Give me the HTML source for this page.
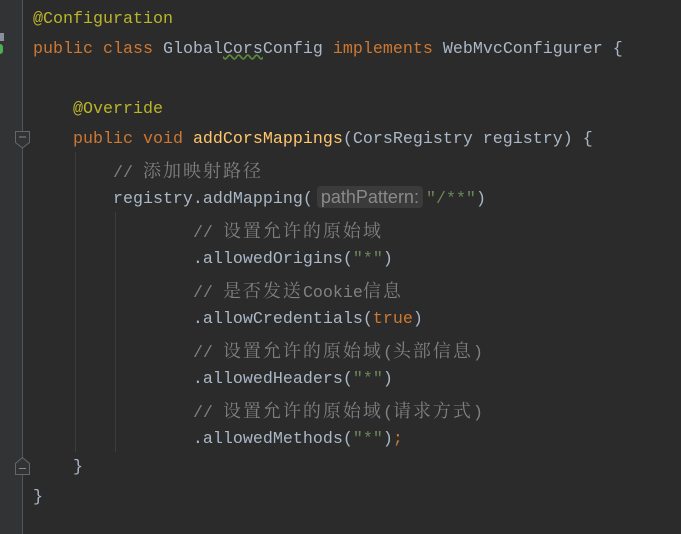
<!DOCTYPE html>
<html><head><meta charset="utf-8"><style>
html,body{margin:0;padding:0}
body{width:681px;height:534px;background:#2b2b2b;position:relative;overflow:hidden;font-family:"Liberation Mono","Noto Serif CJK SC",monospace;font-size:16.67px;color:#a9b7c6}
.g{position:absolute;left:0;top:0;width:22px;height:534px;background:#313335}
.sep{position:absolute;left:22px;top:0;width:1px;height:534px;background:#555}
.l{position:absolute;left:33px;height:30px;line-height:30px;white-space:pre}
.a{color:#bbb529}.k{color:#cc7832}.c{color:#808080}.s{color:#6a8759}.m{color:#ffc66d}
.cn{font-family:"Noto Serif CJK SC",serif;font-size:18px;letter-spacing:2px}
.ig{position:absolute;width:1px;background:#3b3b3b}
.hint{display:inline-block;line-height:22px;background:#3b3b3b;color:#8a8a8a;font-family:"Liberation Sans",sans-serif;font-size:18px;border-radius:4px;padding:0 4px;margin:0 3px 0 4px}
</style></head><body>
<div class="g"></div><div class="sep"></div>
<div style="position:absolute;left:0;top:33px;width:4px;height:8px;background:#8a9099"></div>
<div style="position:absolute;left:0;top:44px;width:3px;height:10px;background:#4caf50;border-radius:0 4px 4px 0"></div>
<svg style="position:absolute;left:14px;top:130px" width="18" height="20"><path d="M1.5 1.5H15.5V12.5L8.5 18L1.5 12.5Z" fill="#313335" stroke="#666" /><path d="M5 7H12" stroke="#888"/></svg>
<svg style="position:absolute;left:14px;top:456px" width="18" height="20"><path d="M1.5 18.5H15.5V7.5L8.5 1.5L1.5 7.5Z" fill="#313335" stroke="#666"/><path d="M5 12.5H12" stroke="#888"/></svg>
<div class="ig" style="left:75px;top:152px;height:300px"></div>
<div class="ig" style="left:115px;top:212px;height:240px"></div>
<div class="l" style="top:5px"><span class="a">@Configuration</span></div>
<div class="l" style="top:35px"><span class="k">public class </span>Global<span style="text-decoration:underline wavy #5a8a3a">Cors</span>Config <span class="k">implements </span>WebMvcConfigurer {</div>
<div class="l" style="top:95px">    <span class="a">@Override</span></div>
<div class="l" style="top:125px">    <span class="k">public void </span><span class="m">addCorsMappings</span>(CorsRegistry registry) {</div>
<div class="l" style="top:155px">        <span class="c">// <span class="cn">添加映射路径</span></span></div>
<div class="l" style="top:185px">        registry.addMapping(<span class="hint">pathPattern:</span><span class="s">"/**"</span>)</div>
<div class="l" style="top:215px">                <span class="c">// <span class="cn">设置允许的原始域</span></span></div>
<div class="l" style="top:245px">                .allowedOrigins(<span class="s">"*"</span>)</div>
<div class="l" style="top:275px">                <span class="c">// <span class="cn">是否发送</span>Cookie<span class="cn">信息</span></span></div>
<div class="l" style="top:305px">                .allowCredentials(<span class="k">true</span>)</div>
<div class="l" style="top:335px">                <span class="c">// <span class="cn">设置允许的原始域</span>(<span class="cn">头部信息</span>)</span></div>
<div class="l" style="top:365px">                .allowedHeaders(<span class="s">"*"</span>)</div>
<div class="l" style="top:395px">                <span class="c">// <span class="cn">设置允许的原始域</span>(<span class="cn">请求方式</span>)</span></div>
<div class="l" style="top:425px">                .allowedMethods(<span class="s">"*"</span>)<span class="k">;</span></div>
<div class="l" style="top:453px">    }</div>
<div class="l" style="top:483px">}</div>
</body></html>
